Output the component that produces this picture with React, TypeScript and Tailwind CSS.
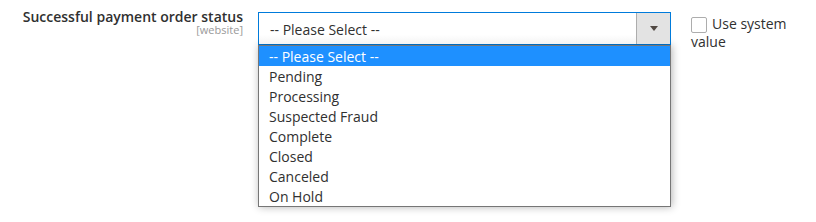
const statuses = [
  '-- Please Select --',
  'Pending',
  'Processing',
  'Suspected Fraud',
  'Complete',
  'Closed',
  'Canceled',
  'On Hold',
];

export default function App() {
  return (
    <div className="w-[816px] h-[222px] bg-white font-['Open_Sans',sans-serif] text-[#303030] overflow-hidden">
      <div className="flex items-start">
        {/* label */}
        <div className="w-[243px] pt-[9px] text-right">
          <div className="text-[14px] font-semibold leading-[16px]">Successful payment order status</div>
          <div className="text-[11px] leading-[10px] text-[#999999]">[website]</div>
        </div>

        {/* select + open list */}
        <div className="ml-[15px] pt-[12px] w-[413px]">
          <div className="flex h-[33px] border border-[#007bdb] bg-white">
            <div className="flex-1 flex items-center pl-[11px] pt-[1px] text-[14px] bg-gradient-to-b from-white from-70% to-[#f4f4f4]">
              -- Please Select --
            </div>
            <div className="w-[34px] flex items-center justify-center bg-[#e3e3e3] border-l border-[#adadad]">
              <span className="w-0 h-0 border-l-[4px] border-r-[4px] border-t-[5px] border-l-transparent border-r-transparent border-t-[#514943]" />
            </div>
          </div>
          <ul className="border border-[#767676] bg-white shadow-[1px_0_8px_rgba(0,0,0,0.3)]">
            {statuses.map((s, i) => (
              <li
                key={s}
                className={`h-[20px] leading-[20px] pt-[1px] pl-[10px] text-[14px] overflow-hidden ${i === 0 ? 'bg-[#1e90ff] text-white' : ''}`}
              >
                {s}
              </li>
            ))}
          </ul>
        </div>

        {/* use system value */}
        <div className="ml-[20px] pt-[15px] w-[110px] text-[14px] leading-[17.5px]">
          <span className="inline-block w-[16px] h-[16px] border border-[#adadad] rounded-[2px] bg-white align-[-4px] mr-[5px]" />
          Use system value
        </div>
      </div>
    </div>
  );
}
